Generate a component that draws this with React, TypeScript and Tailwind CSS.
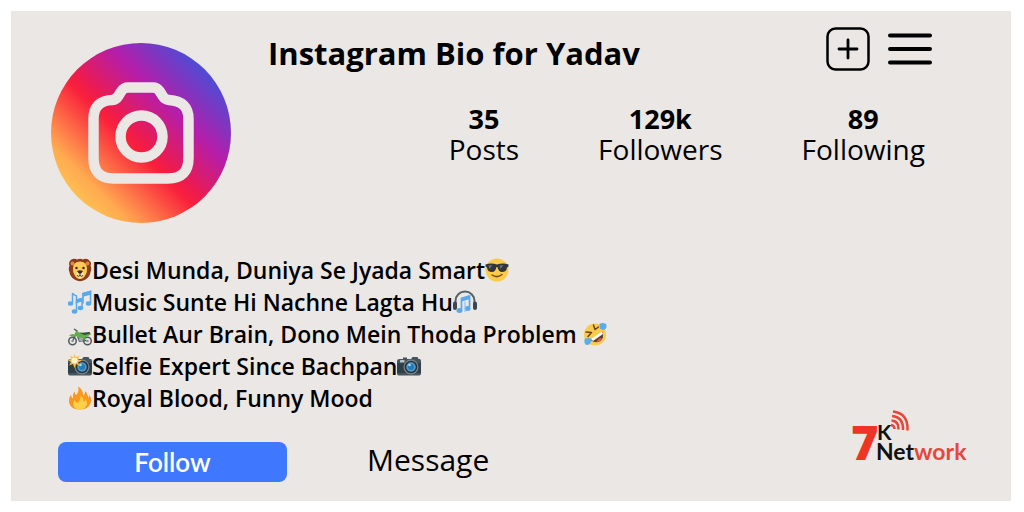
import type { ReactNode } from 'react';

const stats = [
  { value: '35', label: 'Posts' },
  { value: '129k', label: 'Followers' },
  { value: '89', label: 'Following' },
];

function Emoji({ label, children }: { label: string; children: ReactNode }) {
  return (
    <svg viewBox="0 0 48 48" role="img" aria-label={label} className="size-6 shrink-0">
      {children}
    </svg>
  );
}

function Lion() {
  return (
    <Emoji label="Lion">
      <path d="M7 3C11 0 16 2 18 3Q24 0 30 3C34 0 41 1 43 6Q48 9 45 15Q48 22 45 28Q44 38 35 43Q24 50 13 43Q4 38 3 28Q0 22 3 15Q0 8 7 3Z" fill="#8a3c1b" />
      <circle cx="9" cy="11" r="4" fill="#e0893a" />
      <circle cx="39" cy="11" r="4" fill="#e0893a" />
      <path d="M24 7Q37 7 38 20Q39 28 35 34Q31 42 24 42Q17 42 13 34Q9 28 10 20Q11 7 24 7Z" fill="#ffc955" />
      <path d="M24 24Q33 26 31 34Q29 40 24 40Q19 40 17 34Q15 26 24 24Z" fill="#ffe7aa" />
      <path d="M18 26Q24 23 30 26Q28 31 24 32Q20 31 18 26Z" fill="#3e2a24" />
      <path d="M24 31V35M18 35Q21 38 24 35Q27 38 30 35" fill="none" stroke="#4d2c20" strokeWidth="2" />
      <circle cx="17" cy="20" r="2.5" fill="#3e2a24" />
      <circle cx="31" cy="20" r="2.5" fill="#3e2a24" />
    </Emoji>
  );
}

function Notes() {
  return (
    <Emoji label="Musical notes">
      <g fill="#58a9ec" stroke="#58a9ec" strokeWidth="3">
        <path d="M9 26V6Q11 10 17 12V31M30 27V7L45 3V26M17 43V20L28 17V35" fill="none" />
        <path d="M30 7L45 3V8L30 12ZM17 20L29 17V21L17 25Z" />
        <ellipse cx="5" cy="27" rx="4" ry="3" />
        <ellipse cx="13" cy="43" rx="4" ry="3" />
        <ellipse cx="25" cy="36" rx="4" ry="3" />
        <ellipse cx="41" cy="27" rx="4" ry="3" />
      </g>
    </Emoji>
  );
}

function Motorcycle() {
  return (
    <Emoji label="Motorcycle">
      <g fill="none" stroke="#4e5960" strokeWidth="3">
        <circle cx="9" cy="38" r="7.5" />
        <circle cx="39" cy="38" r="7.5" />
        <path d="M12 14L18 18L10 37M24 37H37" />
      </g>
      <circle cx="9" cy="38" r="2.5" fill="#87939a" />
      <circle cx="39" cy="38" r="2.5" fill="#87939a" />
      <path d="M17 27L31 27L34 38L22 40Z" fill="#59656b" />
      <path d="M2 27Q8 22 14 25L17 17L22 21Q28 19 31 24L44 22L46 25L36 30L32 36L22 33L17 28L11 30Z" fill="#62ad4c" />
      <path d="M24 22L43 20L45 23L33 26Z" fill="#374b3c" />
      <circle cx="26" cy="35" r="4" fill="#a1aaaf" />
    </Emoji>
  );
}

function CameraBody() {
  return (
    <>
      <path d="M5 10H12V7H20V10H28L31 6H41L43 10H45Q48 10 48 14V39Q48 43 44 43H4Q0 43 0 39V14Q0 10 5 10Z" fill="#455560" />
      <path d="M0 18H48V38H0Z" fill="#303e48" />
      <circle cx="28" cy="26" r="15" fill="#78858d" />
      <circle cx="28" cy="26" r="12.5" fill="#28333c" />
      <circle cx="28" cy="26" r="9.5" fill="#4e9bd0" />
      <circle cx="28" cy="26" r="6" fill="#277bb4" />
      <circle cx="25" cy="22" r="2.5" fill="#a9d9f4" />
    </>
  );
}

function FlashCamera() {
  return (
    <Emoji label="Camera with flash">
      <CameraBody />
      <path d="M13 0L16 7L23 3L20 11L28 13L20 17L24 24L16 20L13 28L10 20L2 23L6 16L0 12L7 10L4 3L11 7Z" fill="#f9bc42" />
      <circle cx="13" cy="13" r="6" fill="#fff5c9" />
    </Emoji>
  );
}

function Camera() {
  return (
    <Emoji label="Camera">
      <CameraBody />
      <rect x="6" y="12" width="9" height="5" rx="1" fill="#b8c1c6" />
    </Emoji>
  );
}

function Fire() {
  return (
    <Emoji label="Fire">
      <path d="M20 1Q31 7 30 20Q35 17 34 10Q41 15 40 23Q43 22 43 17Q50 31 42 40Q36 47 24 47Q9 47 4 38Q-1 28 6 17Q6 23 10 25Q9 16 13 11Q13 17 17 18Q23 10 20 1Z" fill="#f8981d" />
      <path d="M25 19Q32 25 31 32Q35 31 35 26Q41 36 35 42Q30 47 24 47Q13 47 11 39Q9 33 14 27Q14 33 19 34Q26 28 25 19Z" fill="#ffd14a" />
    </Emoji>
  );
}

function Sunglasses() {
  return (
    <Emoji label="Smiling face with sunglasses">
      <circle cx="24" cy="24" r="23" fill="#fccb4c" />
      <path d="M1 13Q12 9 24 13Q36 9 47 13V17L44 19Q43 28 34 28Q27 28 25 18H23Q21 28 14 28Q5 28 4 19L1 17Z" fill="#30363b" />
      <path d="M7 15L15 14L9 22ZM29 15L37 14L31 22Z" fill="#69737a" />
      <path d="M14 34Q24 41 34 33" fill="none" stroke="#7b4a22" strokeWidth="3" strokeLinecap="round" />
    </Emoji>
  );
}

function Headphones() {
  return (
    <Emoji label="Headphones">
      <path d="M5 28V22A19 19 0 0 1 43 22V28" fill="none" stroke="#56636b" strokeWidth="4" />
      <rect x="0" y="23" width="8" height="17" rx="4" fill="#39464e" />
      <rect x="40" y="23" width="8" height="17" rx="4" fill="#39464e" />
      <path d="M17 39V17L33 12V34" fill="none" stroke="#58a9ec" strokeWidth="3.5" />
      <path d="M17 16L34 11V18L17 23Z" fill="#58a9ec" />
      <ellipse cx="13" cy="41" rx="6" ry="5" fill="#58a9ec" />
      <ellipse cx="29" cy="37" rx="6" ry="5" fill="#58a9ec" />
      <path d="M24 23V44" stroke="#8fc6f2" strokeWidth="2.5" />
    </Emoji>
  );
}

function Laughing() {
  return (
    <Emoji label="Rolling on the floor laughing">
      <circle cx="24" cy="25" r="22" fill="#fccb4c" />
      <path d="M15 36L39 19Q43 31 35 38Q26 44 15 36Z" fill="#653c25" />
      <path d="M16 34L38 19L40 24L20 38Z" fill="#fff" />
      <path d="M27 40Q31 31 38 33Q34 41 27 40Z" fill="#e35b61" />
      <path d="M6 20L17 21L10 29M21 6L24 15L31 10" fill="none" stroke="#6b4226" strokeWidth="3" strokeLinecap="round" strokeLinejoin="round" />
      <path d="M3 34Q10 30 17 34Q17 43 10 46Q4 47 3 41ZM33 4Q39 0 46 4Q49 10 44 15Q38 17 34 13Z" fill="#5baee5" />
    </Emoji>
  );
}

const bio = [
  { before: <Lion />, text: 'Desi Munda, Duniya Se Jyada Smart', after: <Sunglasses /> },
  { before: <Notes />, text: 'Music Sunte Hi Nachne Lagta Hu', after: <Headphones /> },
  { before: <Motorcycle />, text: 'Bullet Aur Brain, Dono Mein Thoda Problem\u00a0', after: <Laughing /> },
  { before: <FlashCamera />, text: 'Selfie Expert Since Bachpan', after: <Camera /> },
  { before: <Fire />, text: 'Royal Blood, Funny Mood', after: null },
];

function Avatar() {
  return (
    <svg viewBox="0 0 180 180" role="img" aria-label="Profile picture" className="size-[180px] shrink-0">
      <defs>
        <linearGradient id="avatar-fill" gradientUnits="userSpaceOnUse" x1="27" y1="153" x2="153" y2="27">
          <stop offset="0" stopColor="#ffbd53" />
          <stop offset="0.1" stopColor="#ffaa50" />
          <stop offset="0.42" stopColor="#f91f3c" />
          <stop offset="0.48" stopColor="#ed1b4d" />
          <stop offset="0.72" stopColor="#b41eaa" />
          <stop offset="1" stopColor="#504bd4" />
        </linearGradient>
      </defs>
      <circle cx="90" cy="90" r="90" fill="url(#avatar-fill)" />
      <g fill="none" stroke="#ebe7e5" strokeWidth="10.5">
        <path d="M77 44.5H102Q106 44.5 108.500 48L112 53.500Q114 56.500 118 57Q137.500 58 137.500 76V115Q137.500 135.500 117 135.500H62.500Q42.500 135.500 42.500 115V76Q42.500 58 61 57Q65 56.500 67 53.500L70.500 48Q73 44.500 77 44.500Z" />
        <circle cx="90.500" cy="93.500" r="21" />
      </g>
    </svg>
  );
}

function Logo() {
  return (
    <svg viewBox="0 0 116 56" role="img" aria-label="7K Network" className="h-14 w-[116px] overflow-visible">
      <text x="0" y="50" fill="#ee3524" className="font-[family-name:Open_Sans,sans-serif] text-[47px] font-extrabold">7</text>
      <text x="26" y="30" fill="#111" className="font-[family-name:Lato,sans-serif] text-[21px] font-bold">K</text>
      <text x="25" y="50" fill="#111" className="font-[family-name:Lato,sans-serif] text-[23px] font-bold">
        Net<tspan fill="#e5473c">work</tspan>
      </text>
      <g fill="none" stroke="#e5473c" strokeWidth="2.500">
        <path d="M40 15Q43.500 15.500 43.500 19M40.500 10.500Q48 11 47.500 19.500M41 6Q52.500 7 52 20M42 1.500Q57.500 3.500 56.500 20.500" />
      </g>
    </svg>
  );
}

export default function App() {
  return (
    <div className="bg-white py-[11px] pr-[13px] pl-[11px] font-[family-name:Open_Sans,Noto_Sans,sans-serif] text-black">
      <main className="flex flex-col bg-[#ebe7e5] pb-[19px]">
        <header className="flex gap-[37px] pt-4 pr-[79px] pl-10">
          <div className="pt-4">
            <Avatar />
          </div>
          <div className="flex min-w-0 flex-1 flex-col">
            <div className="flex items-start justify-between">
              <h1 className="pt-1 text-[31px] leading-[44px] font-bold">Instagram Bio for Yadav</h1>
              <div className="flex gap-[18px]">
                <button type="button" aria-label="New post">
                  <svg viewBox="0 0 44 44" className="size-11" fill="none" stroke="#000">
                    <rect x="1.500" y="1.500" width="41" height="41" rx="8" strokeWidth="2.500" />
                    <path d="M22 13V31M13 22H31" strokeWidth="2.800" strokeLinecap="round" />
                  </svg>
                </button>
                <button type="button" aria-label="Menu">
                  <svg viewBox="0 0 44 44" className="size-11" stroke="#000" strokeWidth="4" strokeLinecap="round">
                    <path d="M2 8.500H42M2 22H42M2 35.500H42" />
                  </svg>
                </button>
              </div>
            </div>
            <dl className="flex justify-end gap-[79px] pt-7 pr-[7px] text-center">
              {stats.map((s) => (
                <div key={s.label} className="flex flex-col-reverse">
                  <dt className="text-[28px] leading-[31px]">{s.label}</dt>
                  <dd className="text-[27px] leading-[31px] font-bold">{s.value}</dd>
                </div>
              ))}
            </dl>
          </div>
        </header>
        <ul className="pt-[31px] pl-[57px] text-[23px] leading-8 font-semibold">
          {bio.map((line) => (
            <li key={line.text} className="flex items-center whitespace-nowrap">
              {line.before}
              <span>{line.text}</span>
              {line.after}
            </li>
          ))}
        </ul>
        <footer className="flex items-end pr-11 pl-[47px]">
          <button type="button" className="h-10 w-[229px] rounded-lg bg-[#3f77ff] font-[family-name:Lato,sans-serif] text-[26px] font-semibold text-white">
            Follow
          </button>
          <button type="button" className="ml-20 h-11 text-[30px] leading-[44px]">
            Message
          </button>
          <div className="-mt-1 ml-auto pb-4">
            <Logo />
          </div>
        </footer>
      </main>
    </div>
  );
}
